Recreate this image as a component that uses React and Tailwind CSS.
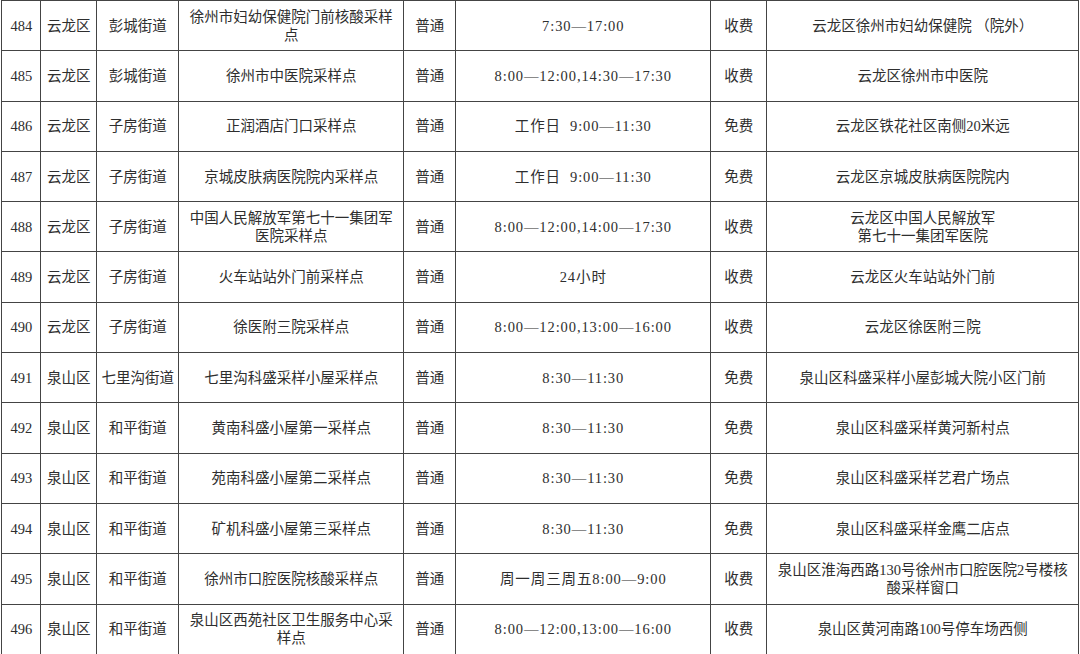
import React from "react";

const rows = [
  ["484", "云龙区", "彭城街道", ["徐州市妇幼保健院门前核酸采样", "点"], "普通", "7:30—17:00", "收费", ["云龙区徐州市妇幼保健院 （院外）"]],
  ["485", "云龙区", "彭城街道", ["徐州市中医院采样点"], "普通", "8:00—12:00,14:30—17:30", "收费", ["云龙区徐州市中医院"]],
  ["486", "云龙区", "子房街道", ["正润酒店门口采样点"], "普通", "工作日  9:00—11:30", "免费", ["云龙区铁花社区南侧20米远"]],
  ["487", "云龙区", "子房街道", ["京城皮肤病医院院内采样点"], "普通", "工作日  9:00—11:30", "免费", ["云龙区京城皮肤病医院院内"]],
  ["488", "云龙区", "子房街道", ["中国人民解放军第七十一集团军", "医院采样点"], "普通", "8:00—12:00,14:00—17:30", "收费", ["云龙区中国人民解放军", "第七十一集团军医院"]],
  ["489", "云龙区", "子房街道", ["火车站站外门前采样点"], "普通", "24小时", "收费", ["云龙区火车站站外门前"]],
  ["490", "云龙区", "子房街道", ["徐医附三院采样点"], "普通", "8:00—12:00,13:00—16:00", "收费", ["云龙区徐医附三院"]],
  ["491", "泉山区", "七里沟街道", ["七里沟科盛采样小屋采样点"], "普通", "8:30—11:30", "免费", ["泉山区科盛采样小屋彭城大院小区门前"]],
  ["492", "泉山区", "和平街道", ["黄南科盛小屋第一采样点"], "普通", "8:30—11:30", "免费", ["泉山区科盛采样黄河新村点"]],
  ["493", "泉山区", "和平街道", ["苑南科盛小屋第二采样点"], "普通", "8:30—11:30", "免费", ["泉山区科盛采样艺君广场点"]],
  ["494", "泉山区", "和平街道", ["矿机科盛小屋第三采样点"], "普通", "8:30—11:30", "免费", ["泉山区科盛采样金鹰二店点"]],
  ["495", "泉山区", "和平街道", ["徐州市口腔医院核酸采样点"], "普通", "周一周三周五8:00—9:00", "收费", ["泉山区淮海西路130号徐州市口腔医院2号楼核", "酸采样窗口"]],
  ["496", "泉山区", "和平街道", ["泉山区西苑社区卫生服务中心采", "样点"], "普通", "8:00—12:00,13:00—16:00", "收费", ["泉山区黄河南路100号停车场西侧"]],
];

const td = "border-[1.5px] border-[#444] text-center align-middle p-0 leading-[18px] whitespace-pre";

function Lines({ lines }) {
  return lines.map((l, i) => (
    <React.Fragment key={i}>
      {i > 0 && <br />}
      {l}
    </React.Fragment>
  ));
}

export default function App() {
  return (
    <div className="w-[1080px] h-[654px] overflow-hidden bg-white">
      <table
        className="ml-[1.25px] border-collapse table-fixed text-[14.5px] text-[#2e2e2e]"
        style={{ width: "1077px", fontFamily: '"Liberation Serif", "Noto Sans CJK SC", serif' }}
      >
        <colgroup>
          <col className="w-[39px]" />
          <col className="w-[56px]" />
          <col className="w-[82px]" />
          <col className="w-[225px]" />
          <col className="w-[52px]" />
          <col className="w-[255px]" />
          <col className="w-[56px]" />
          <col className="w-[312px]" />
        </colgroup>
        <tbody>
          {rows.map((r) => (
            <tr key={r[0]} className="h-[50.3px]">
              <td className={td}>{r[0]}</td>
              <td className={td}>{r[1]}</td>
              <td className={td}>{r[2]}</td>
              <td className={td}><Lines lines={r[3]} /></td>
              <td className={td}>{r[4]}</td>
              <td className={td + " tracking-[0.9px]"}>{r[5]}</td>
              <td className={td}>{r[6]}</td>
              <td className={td}><Lines lines={r[7]} /></td>
            </tr>
          ))}
        </tbody>
      </table>
    </div>
  );
}
